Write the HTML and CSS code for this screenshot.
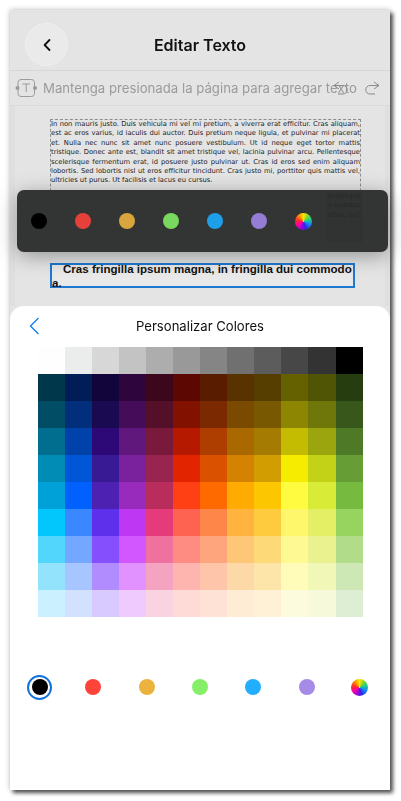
FILE: index.html
```html
<!DOCTYPE html>
<html lang="es">
<head>
    <meta charset="UTF-8">
    <title>Editar Texto</title>
    <link rel="stylesheet" href="styles.css">
</head>
<body>

<div class="phone">

    <div class="header">
        <a class="back-btn" href="#">
            <svg width="10" height="14" viewBox="0 0 10 14"><path d="M7.5 2 L2.6 7 L7.5 12" fill="none" stroke="#111" stroke-width="1.8" stroke-linecap="round" stroke-linejoin="round"/></svg>
        </a>
        <div class="header-title">Editar Texto</div>
    </div>

    <div class="toolbar">
        <svg class="text-icon" width="22" height="20" viewBox="0 0 22 20">
            <rect x="3" y="1.5" width="16.5" height="17" rx="3" fill="none" stroke="#9a9b9a" stroke-width="1"/>
            <circle cx="2.5" cy="10" r="2" fill="#9a9b9a"/>
            <circle cx="20" cy="10" r="2" fill="#9a9b9a"/>
            <path d="M7.5 6 H15 M11.2 6 V14" fill="none" stroke="#9a9b9a" stroke-width="1"/>
        </svg>
        <span class="toolbar-hint">Mantenga presionada la página para agregar texto</span>
        <div class="toolbar-actions">
            <svg width="15" height="14" viewBox="0 0 15 14"><path d="M6 1 L1 4.5 L6 8 M1 4.5 H10 A4.2 4.2 0 0 1 10 13 H5" fill="none" stroke="#8a8b8a" stroke-width="1"/></svg>
            <svg width="15" height="14" viewBox="0 0 15 14"><path d="M9 1 L14 4.5 L9 8 M14 4.5 H5 A4.2 4.2 0 0 0 5 13 H10" fill="none" stroke="#8a8b8a" stroke-width="1"/></svg>
        </div>
    </div>

    <div class="doc">
        <div class="doc-page">
            <div class="text-box">
                <div class="ln">In non mauris justo. Duis vehicula mi vel mi pretium, a viverra erat efficitur. Cras aliquam,</div>
                <div class="ln">est ac eros varius, id iaculis dui auctor. Duis pretium neque ligula, et pulvinar mi placerat</div>
                <div class="ln">et. Nulla nec nunc sit amet nunc posuere vestibulum. Ut id neque eget tortor mattis</div>
                <div class="ln">tristique. Donec ante est, blandit sit amet tristique vel, lacinia pulvinar arcu. Pellentesque</div>
                <div class="ln">scelerisque fermentum erat, id posuere justo pulvinar ut. Cras id eros sed enim aliquam</div>
                <div class="ln">lobortis. Sed lobortis nisl ut eros efficitur tincidunt. Cras justo mi, porttitor quis mattis vel,</div>
                <div class="ln ln-end">ultricies ut purus. Ut facilisis et lacus eu cursus.</div>
            </div>
            <div class="text-box-active">
                <div class="active-text">Cras fringilla ipsum magna, in fringilla dui commodo<br>a.</div>
            </div>
        </div>
    </div>

    <div class="color-bar">
        <span class="dot dot-black"></span>
        <span class="dot dot-red"></span>
        <span class="dot dot-yellow"></span>
        <span class="dot dot-green"></span>
        <span class="dot dot-blue"></span>
        <span class="dot dot-purple"></span>
        <span class="dot dot-wheel"></span>
        <!-- texto de la pagina que se transparenta -->
        <div class="bar-ghost">lentesque<br>n egestas<br>vitae, orci</div>
    </div>

    <div class="sheet">
        <div class="sheet-head">
            <svg class="sheet-back" width="12" height="18" viewBox="0 0 12 18"><path d="M10 1.5 L2.5 9 L10 16.5" fill="none" stroke="#1a82f0" stroke-width="1.5" stroke-linecap="round" stroke-linejoin="round"/></svg>
            <span class="sheet-title">Personalizar Colores</span>
        </div>

        <div class="palette">
            <i style="background:#fefefe"></i><i style="background:#ebecec"></i><i style="background:#d6d7d6"></i><i style="background:#c2c3c2"></i><i style="background:#adadad"></i><i style="background:#999999"></i><i style="background:#858585"></i><i style="background:#707070"></i><i style="background:#5c5c5c"></i><i style="background:#474747"></i><i style="background:#333333"></i><i style="background:#000000"></i>
            <i style="background:#00374a"></i><i style="background:#011d57"></i><i style="background:#11053b"></i><i style="background:#2e063d"></i><i style="background:#3c071b"></i><i style="background:#5c0701"></i><i style="background:#5a1c00"></i><i style="background:#583300"></i><i style="background:#563d00"></i><i style="background:#666100"></i><i style="background:#4f5504"></i><i style="background:#263e0f"></i>
            <i style="background:#004d65"></i><i style="background:#012f7b"></i><i style="background:#1a0a52"></i><i style="background:#450d59"></i><i style="background:#551029"></i><i style="background:#831100"></i><i style="background:#7b2900"></i><i style="background:#7a4a00"></i><i style="background:#785800"></i><i style="background:#8d8602"></i><i style="background:#6f760a"></i><i style="background:#38571a"></i>
            <i style="background:#016e8f"></i><i style="background:#0042a9"></i><i style="background:#2c0977"></i><i style="background:#61187c"></i><i style="background:#791a3d"></i><i style="background:#b51a00"></i><i style="background:#ad3e00"></i><i style="background:#a96800"></i><i style="background:#a67b01"></i><i style="background:#c4bc00"></i><i style="background:#9ba50e"></i><i style="background:#4e7a27"></i>
            <i style="background:#008cb4"></i><i style="background:#0056d6"></i><i style="background:#371a94"></i><i style="background:#7a219e"></i><i style="background:#99244f"></i><i style="background:#e22400"></i><i style="background:#da5100"></i><i style="background:#d38301"></i><i style="background:#d19d01"></i><i style="background:#f5ec00"></i><i style="background:#c3d117"></i><i style="background:#669d34"></i>
            <i style="background:#00a1d8"></i><i style="background:#0061fe"></i><i style="background:#4d22b2"></i><i style="background:#982abc"></i><i style="background:#b92d5d"></i><i style="background:#ff4015"></i><i style="background:#ff6a00"></i><i style="background:#ffab01"></i><i style="background:#fcc700"></i><i style="background:#fefb41"></i><i style="background:#d8ec37"></i><i style="background:#76bb40"></i>
            <i style="background:#01c7fc"></i><i style="background:#3a87fe"></i><i style="background:#5e30eb"></i><i style="background:#be38f3"></i><i style="background:#e63b7a"></i><i style="background:#fe6250"></i><i style="background:#fe8648"></i><i style="background:#feb43f"></i><i style="background:#fecb3e"></i><i style="background:#fff76b"></i><i style="background:#e4ef65"></i><i style="background:#96d35f"></i>
            <i style="background:#52d6fc"></i><i style="background:#74a7ff"></i><i style="background:#864ffe"></i><i style="background:#d357fe"></i><i style="background:#ee719e"></i><i style="background:#ff8c82"></i><i style="background:#fea57d"></i><i style="background:#fec777"></i><i style="background:#fed977"></i><i style="background:#fff994"></i><i style="background:#eaf28f"></i><i style="background:#b1dd8b"></i>
            <i style="background:#93e3fc"></i><i style="background:#a7c6ff"></i><i style="background:#b18cfe"></i><i style="background:#e292fe"></i><i style="background:#f4a4c0"></i><i style="background:#ffb5af"></i><i style="background:#ffc5ab"></i><i style="background:#fed9a8"></i><i style="background:#fde4a8"></i><i style="background:#fffbb9"></i><i style="background:#f1f7b7"></i><i style="background:#cde8b5"></i>
            <i style="background:#cbf0ff"></i><i style="background:#d2e2fe"></i><i style="background:#d8c9fe"></i><i style="background:#efcaff"></i><i style="background:#f9d3e0"></i><i style="background:#ffdbd8"></i><i style="background:#ffe2d6"></i><i style="background:#feecd4"></i><i style="background:#fef1d5"></i><i style="background:#fdfbdd"></i><i style="background:#f6fadb"></i><i style="background:#deeed4"></i>
        </div>

        <div class="swatches">
            <span class="swatch-current"><span class="dot dot-black"></span></span>
            <span class="dot dot-red2"></span>
            <span class="dot dot-yellow2"></span>
            <span class="dot dot-green2"></span>
            <span class="dot dot-blue2"></span>
            <span class="dot dot-purple2"></span>
            <span class="dot dot-wheel"></span>
        </div>
    </div>

</div>

</body>
</html>
```

FILE: styles.css
```css
html, body, div, span, a, i {
    padding: 0px;
    margin: 0px;
}

body {
    background: #ffffff;
    padding: 10px;
    font-family: "Inter", "Roboto", sans-serif;
}

.phone {
    width: 380px;
    height: 780px;
    position: relative;
    display: flex;
    flex-direction: column;
    background: #e3e4e3;
    box-shadow: 3px 3px 4px rgba(0, 0, 0, 0.65), 0px 0px 6px rgba(0, 0, 0, 0.25);
    filter: blur(0.3px);
}

/* header */
.header {
    height: 60px;
    flex: none;
    display: flex;
    align-items: center;
    justify-content: center;
    position: relative;
    border-bottom: #d6d7d6 solid 1px;
}

.back-btn {
    position: absolute;
    left: 15px;
    top: 13px;
    width: 43px;
    height: 43px;
    border-radius: 22px;
    background: #e9eae9;
    border: #eeefee solid 1px;
    box-sizing: border-box;
    display: flex;
    align-items: center;
    justify-content: center;
}

.header-title {
    font-size: 16px;
    font-weight: 600;
    color: #111111;
    margin-top: 9px;
}

/* toolbar */
.toolbar {
    height: 34px;
    flex: none;
    display: flex;
    align-items: center;
    padding-left: 5px;
    position: relative;
    border-bottom: #d9dad9 solid 1px;
}

.text-icon {
    flex: none;
}

.toolbar-hint {
    font-size: 13.2px;
    color: #9a9b9a;
    margin-left: 6px;
    white-space: nowrap;
}

.toolbar-actions {
    position: absolute;
    right: 10px;
    top: 10px;
    display: flex;
    gap: 17px;
}

/* document */
.doc {
    flex: 1;
    padding: 0px 5px;
    background: #dedfde;
}

.doc-page {
    height: 100%;
    background: #e4e4e4;
    padding: 13px 29px 0px 35px;
    box-sizing: border-box;
}

.text-box {
    width: 311px;
    height: 132px;
    box-sizing: border-box;
    border: #8d8d8d dashed 1px;
    font-family: "DejaVu Sans", sans-serif;
    font-size: 6.75px;
    line-height: 9.4px;
    color: #222222;
}

.ln {
    white-space: nowrap;
    text-align: justify;
    text-align-last: justify;
}

.ln-end {
    text-align-last: left;
}

.text-box-active {
    width: 305px;
    height: 25px;
    box-sizing: border-box;
    margin-top: 12px;
    border: #1f78d1 solid 2px;
    background: #e9e9e9;
}

.active-text {
    margin-top: -3px;
    font-family: "Liberation Sans", sans-serif;
    font-weight: bold;
    font-size: 11.55px;
    line-height: 14px;
    color: #111111;
    text-indent: 11px;
    white-space: nowrap;
}

/* floating colour bar */
.color-bar {
    position: absolute;
    left: 7px;
    top: 180px;
    width: 371px;
    height: 62px;
    box-sizing: border-box;
    padding-left: 14px;
    display: flex;
    align-items: center;
    gap: 28px;
    border-radius: 7px;
    background: #333534;
    box-shadow: 0px 4px 20px rgba(0, 0, 0, 0.35);
}

.bar-ghost {
    position: absolute;
    left: 309px;
    top: 2px;
    width: 35px;
    height: 50px;
    background: #313332;
    border-right: #2c2d2c dashed 1px;
    font-family: "DejaVu Sans", sans-serif;
    font-size: 6.75px;
    line-height: 9.4px;
    text-align: right;
    white-space: nowrap;
    color: #262726;
}

.dot {
    width: 16px;
    height: 16px;
    border-radius: 8px;
    display: block;
    flex: none;
}

.dot-black { background: #000000; }
.dot-red { background: #e5413a; }
.dot-yellow { background: #d8a63c; }
.dot-green { background: #79d95f; }
.dot-blue { background: #1f9fe8; }
.dot-purple { background: #957cd4; }
.dot-red2 { background: #ff433b; }
.dot-yellow2 { background: #ebb23e; }
.dot-green2 { background: #86ee69; }
.dot-blue2 { background: #22aeff; }
.dot-purple2 { background: #a58ae6; }

.dot-wheel {
    width: 17px;
    height: 17px;
    border-radius: 9px;
    background: conic-gradient(#ffe600, #7bd82a, #12c8a0, #1a7cff, #2a2ae0, #a000e0, #ff00a0, #ff2a2a, #ff8a00, #ffe600);
}

/* bottom sheet */
.sheet {
    height: 484px;
    flex: none;
    background: #ffffff;
    border-radius: 14px 14px 0px 0px;
}

.sheet-head {
    height: 41px;
    display: flex;
    align-items: center;
    justify-content: center;
    position: relative;
}

.sheet-back {
    position: absolute;
    left: 18px;
    top: 11px;
}

.sheet-title {
    font-size: 13.1px;
    color: #111111;
    margin-top: -2px;
}

.palette {
    display: grid;
    grid-template-columns: repeat(12, 27.05px);
    grid-auto-rows: 27.05px;
    margin-left: 28px;
}

.swatches {
    display: grid;
    grid-template-columns: repeat(7, 53.33px);
    justify-items: center;
    align-items: center;
    padding-left: 3.33px;
    margin-top: 57.5px;
}

.swatch-current {
    width: 25px;
    height: 25px;
    box-sizing: border-box;
    border: #1273de solid 2px;
    border-radius: 13px;
    display: flex;
    align-items: center;
    justify-content: center;
}
```
